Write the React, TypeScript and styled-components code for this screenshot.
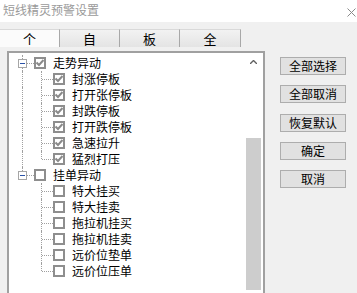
import React from "react";
import styled, { createGlobalStyle, css } from "styled-components";

const GlobalStyle = createGlobalStyle`
  html, body {
    margin: 0;
    padding: 0;
    background: #f0f0f0;
  }
  body {
    width: 357px;
    height: 293px;
    overflow: hidden;
    font-family: "Noto Sans CJK SC", "Microsoft YaHei", sans-serif;
    font-size: 12px;
    color: #000;
  }
`;

const Window = styled.div`
  width: 357px;
  height: 293px;
  display: flex;
  flex-direction: column;
  overflow: hidden;
`;

const TitleBar = styled.div`
  height: 22px;
  flex: none;
  background: #fff;
  display: flex;
  align-items: flex-start;
  justify-content: space-between;
  padding: 2px 1px 0 3px;
  box-sizing: border-box;
  color: #9a9a9a;
  line-height: 16px;
`;

const CloseIcon = styled.svg`
  margin-top: 6px;
  width: 9px;
  height: 9px;
`;

const Main = styled.div`
  flex: 1;
  display: flex;
  min-height: 0;
`;

const LeftCol = styled.div`
  width: 265px;
  display: flex;
  flex-direction: column;
`;

const TabStrip = styled.div`
  margin-top: 7px;
  height: 18px;
  display: flex;
`;

const Tab = styled.div<{ $active?: boolean; $w: number }>`
  width: ${(p) => p.$w}px;
  box-sizing: border-box;
  text-align: center;
  line-height: 17px;
  font-size: 13px;
  border-top: 1px solid #d9d9d9;
  border-right: 1px solid #a8a8a8;
  ${(p) =>
    p.$active
      ? css`
          background: #fbfbfb;
        `
      : css`
          background: linear-gradient(#f2f2f2, #e4e4e4);
        `}
`;

const Panel = styled.div`
  margin: 4px 0 0 7px;
  width: 258px;
  height: 260px;
  flex: none;
  box-sizing: border-box;
  border: 2px solid #a0a0a0;
  background: #fff;
  display: flex;
`;

const TreeList = styled.div`
  flex: 1;
  padding-top: 2px;
`;

const Row = styled.div`
  height: 16px;
  display: flex;
  align-items: center;
  white-space: nowrap;
`;

type Trunk = "full" | "top" | "none";

const Gutter = styled.div<{ $w: number; $x: number; $trunk: Trunk; $branch?: boolean }>`
  position: relative;
  width: ${(p) => p.$w}px;
  height: 16px;
  flex: none;
  display: flex;
  align-items: center;
  &::before {
    content: "";
    position: absolute;
    left: ${(p) => p.$x}px;
    top: 0;
    height: ${(p) => (p.$trunk === "full" ? 16 : p.$trunk === "top" ? 8 : 0)}px;
    border-left: 1px dotted #a0a0a0;
  }
  ${(p) =>
    p.$branch &&
    css`
      &::after {
        content: "";
        position: absolute;
        left: ${p.$x + 1}px;
        right: 0;
        top: 8px;
        border-top: 1px dotted #a0a0a0;
      }
    `}
`;

const Expander = styled.svg`
  position: relative;
  z-index: 1;
  margin-left: 9px;
  width: 9px;
  height: 9px;
  flex: none;
`;

const Stub = styled.span`
  flex: 1;
  height: 0;
  margin-top: 1px;
  border-top: 1px dotted #a0a0a0;
`;

const Box = styled.span`
  width: 12px;
  height: 12px;
  box-sizing: border-box;
  border: 2px solid #8e8e8e;
  background: #fff;
  flex: none;
  display: flex;
  align-items: center;
  justify-content: center;
`;

const Label = styled.span`
  margin-left: 7px;
  line-height: 16px;
`;

const ScrollBar = styled.div`
  width: 17px;
  flex: none;
  display: flex;
  flex-direction: column;
  padding-right: 2px;
  box-sizing: border-box;
  background: #fff;
`;

const ArrowBtn = styled.div`
  height: 18px;
  display: flex;
  align-items: center;
  justify-content: center;
`;

const Track = styled.div<{ $h: number }>`
  height: ${(p) => p.$h}px;
  flex: none;
`;

const Thumb = styled.div`
  height: 152px;
  flex: none;
  background: #cdcdcd;
`;

const RightCol = styled.div`
  margin-left: 15px;
  padding-top: 35px;
  display: flex;
  flex-direction: column;
  gap: 10.3px;
`;

const Button = styled.div`
  width: 66px;
  height: 18px;
  box-sizing: border-box;
  border: 1px solid #adadad;
  background: #e1e1e1;
  display: flex;
  align-items: center;
  justify-content: center;
  line-height: 16px;
`;

function Check({ on }: { on: boolean }) {
  return (
    <Box>
      {on && (
        <svg width="8" height="8" viewBox="0 0 8 8">
          <polyline points="0.5,3.5 3,6 7.5,1" fill="none" stroke="#8a8a8a" strokeWidth="2" />
        </svg>
      )}
    </Box>
  );
}

const groups = [
  {
    label: "走势异动",
    checked: true,
    children: ["封涨停板", "打开张停板", "封跌停板", "打开跌停板", "急速拉升", "猛烈打压"],
  },
  {
    label: "挂单异动",
    checked: false,
    children: ["特大挂买", "特大挂卖", "拖拉机挂买", "拖拉机挂卖", "远价位垫单", "远价位压单"],
  },
];

const buttons = ["全部选择", "全部取消", "恢复默认", "确定", "取消"];
const tabs = ["个", "自", "板", "全"];

export default function App() {
  return (
    <Window>
      <GlobalStyle />
      <TitleBar>
        <span>短线精灵预警设置</span>
        <CloseIcon viewBox="0 0 9 9">
          <path d="M0.5 0.5 L8.5 8.5 M8.5 0.5 L0.5 8.5" stroke="#8a8a8a" strokeWidth="1" />
        </CloseIcon>
      </TitleBar>
      <Main>
        <LeftCol>
          <TabStrip>
            {tabs.map((t, i) => (
              <Tab key={t} $active={i === 0} $w={i === 3 ? 61 : 60}>
                {t}
              </Tab>
            ))}
          </TabStrip>
          <Panel>
            <TreeList>
              {groups.map((g, gi) => {
                const lastGroup = gi === groups.length - 1;
                return (
                  <React.Fragment key={g.label}>
                    <Row>
                      <Gutter $w={25} $x={13} $trunk={lastGroup ? "top" : "full"}>
                        <Expander viewBox="0 0 9 9">
                          <rect x="0.5" y="0.5" width="8" height="8" fill="#fff" stroke="#a6a6a6" />
                          <line x1="2" y1="4.5" x2="7" y2="4.5" stroke="#2a52a8" />
                        </Expander>
                        <Stub />
                      </Gutter>
                      <Check on={g.checked} />
                      <Label>{g.label}</Label>
                    </Row>
                    {g.children.map((c, ci) => (
                      <Row key={c}>
                        <Gutter $w={25} $x={13} $trunk={lastGroup ? "none" : "full"} />
                        <Gutter
                          $w={19}
                          $x={7}
                          $trunk={ci === g.children.length - 1 ? "top" : "full"}
                          $branch
                        />
                        <Check on={g.checked} />
                        <Label>{c}</Label>
                      </Row>
                    ))}
                  </React.Fragment>
                );
              })}
            </TreeList>
            <ScrollBar>
              <ArrowBtn>
                <svg width="7" height="4" viewBox="0 0 7 4">
                  <path d="M0 4 L3.5 0.5 L7 4" fill="none" stroke="#606060" strokeWidth="1.4" />
                </svg>
              </ArrowBtn>
              <Track $h={67} />
              <Thumb />
            </ScrollBar>
          </Panel>
        </LeftCol>
        <RightCol>
          {buttons.map((b) => (
            <Button key={b}>{b}</Button>
          ))}
        </RightCol>
      </Main>
    </Window>
  );
}
